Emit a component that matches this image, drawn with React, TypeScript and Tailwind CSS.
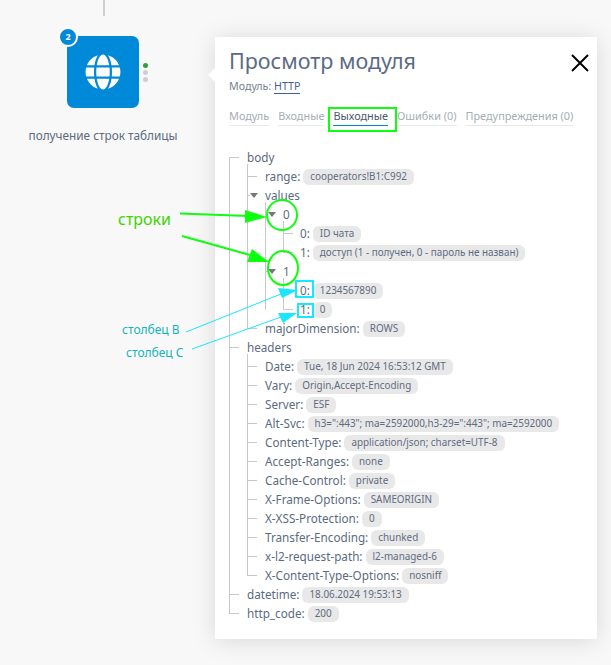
import React from "react";
import { FaGlobe } from "react-icons/fa";

const Chip = ({ children }: { children: React.ReactNode }) => (
  <span className="ml-[3px] inline-flex h-[16px] items-center rounded-[6px] bg-[#e8e8e8] px-[7px] text-[9.9px] leading-none whitespace-nowrap text-[#5f6b82]">
    {children}
  </span>
);

type RowP = { label: string; value?: string; tri?: boolean; short?: boolean };

const Row = ({ label, value, tri, short }: RowP) => (
  <div className="flex h-[19px] items-center whitespace-nowrap text-[11.7px] text-[#5b6b80]">
    {tri ? (
      <span className="-ml-[18px] mr-[7px] flex w-[11px] items-center">
        <span className="h-px w-[3px] bg-[#c8c8c8]" />
        <span className="h-0 w-0 border-x-[4px] border-t-[5px] border-x-transparent border-t-[#777]" />
      </span>
    ) : (
      <span className={short ? "-ml-[17px] mr-[7px] h-px w-[10px] bg-[#c8c8c8]" : "-ml-[18px] mr-[8px] h-px w-[10px] bg-[#c8c8c8]"} />
    )}
    <span>{label}</span>
    {value !== undefined && <Chip>{value}</Chip>}
  </div>
);

const Branch = ({ children, short, root }: { children: React.ReactNode; short?: boolean; root?: boolean }) => (
  <div className={short ? "relative pl-[17px]" : "relative pl-[18px]"}>
    <span className={root ? "absolute bottom-[9px] left-0 top-[9px] w-px bg-[#c8c8c8]" : "absolute bottom-[9px] left-0 -top-[3px] w-px bg-[#c8c8c8]"} />
    {children}
  </div>
);

const headers: [string, string][] = [
  ["Date:", "Tue, 18 Jun 2024 16:53:12 GMT"],
  ["Vary:", "Origin,Accept-Encoding"],
  ["Server:", "ESF"],
  ["Alt-Svc:", 'h3=":443"; ma=2592000,h3-29=":443"; ma=2592000'],
  ["Content-Type:", "application/json; charset=UTF-8"],
  ["Accept-Ranges:", "none"],
  ["Cache-Control:", "private"],
  ["X-Frame-Options:", "SAMEORIGIN"],
  ["X-XSS-Protection:", "0"],
  ["Transfer-Encoding:", "chunked"],
  ["x-l2-request-path:", "l2-managed-6"],
  ["X-Content-Type-Options:", "nosniff"],
];

const Tab = ({ label, active }: { label: string; active?: boolean }) => (
  <span
    className={
      active
        ? "border-b border-[#0088d6] pb-[1px] leading-[16px] text-[#4b5a70]"
        : "border-b border-[#e9e9e9] pb-[1px] leading-[16px] text-[#a6adb6]"
    }
  >
    {label}
  </span>
);

export default function App() {
  return (
    <div className="relative h-[665px] w-[611px] overflow-hidden bg-[#f8f8f8] font-['Noto_Sans',sans-serif]">
      {/* canvas: connector and module node */}
      <div className="absolute left-[103px] top-0 h-[16px] w-[2px] bg-[#cfcfcf]" />
      <div className="absolute left-[3px] top-[36px] flex w-[200px] flex-col items-center">
        <div className="relative flex h-[72px] w-[72px] items-center justify-center rounded-[7px] bg-[#0089d8] text-white">
          <FaGlobe size={36} />
          <span className="absolute -left-[9px] -top-[9px] flex h-[20px] w-[20px] items-center justify-center rounded-full border-2 border-white bg-[#0089d8] text-[9px] font-bold">
            2
          </span>
          <span className="absolute -right-[9px] top-[27px] flex flex-col gap-[2px]">
            <span className="h-[5px] w-[5px] rounded-full bg-[#2ea043]" />
            <span className="h-[5px] w-[5px] rounded-full bg-[#cfcfcf]" />
            <span className="h-[5px] w-[5px] rounded-full bg-[#cfcfcf]" />
          </span>
        </div>
        <div className="mt-[18px] text-[11.8px] leading-[18px] text-[#5b6b80]">получение строк таблицы</div>
      </div>

      {/* panel */}
      <div className="absolute left-[215px] top-[37px] h-[602px] w-[382px] bg-white pl-[14px] pt-[8px] shadow-[0_2px_22px_rgba(0,0,0,0.13)]">
        <span className="absolute -left-[5px] top-[33px] h-[10px] w-[10px] rotate-45 bg-white" />
        <svg className="absolute right-[8px] top-[17px]" width="18" height="18" viewBox="0 0 18 18">
          <path d="M1 1 L17 17 M17 1 L1 17" stroke="#000" strokeWidth="2" fill="none" />
        </svg>
        <div className="text-[21.5px] leading-[32px] text-[#5b6b85]">Просмотр модуля</div>
        <div className="flex h-[18px] items-center text-[10.7px] text-[#76828f]">
          Модуль:&nbsp;
          <span className="border-b border-[#3f5fa8] leading-[14px] text-[#4a5f95]">HTTP</span>
        </div>
        <div className="mt-[13px] flex gap-[9px] text-[10.9px]">
          <Tab label="Модуль" />
          <Tab label="Входные" />
          <Tab label="Выходные" active />
          <Tab label="Ошибки (0)" />
          <Tab label="Предупреждения (0)" />
        </div>
        <div className="mt-[22px]">
          <Branch root>
            <Row label="body" />
            <Branch>
              <Row label="range:" value="cooperators!B1:C992" />
              <Row label="values" tri />
              <Branch>
                <Row label="0" tri />
                <Branch short>
                  <Row label="0:" value="ID чата" short />
                  <Row label="1:" value="доступ (1 - получен, 0 - пароль не назван)" short />
                </Branch>
                <Row label="1" tri />
                <Branch short>
                  <Row label="0:" value="1234567890" short />
                  <Row label="1:" value="0" short />
                </Branch>
              </Branch>
              <Row label="majorDimension:" value="ROWS" />
            </Branch>
            <Row label="headers" />
            <Branch>
              {headers.map(([k, v]) => (
                <Row key={k} label={k} value={v} />
              ))}
            </Branch>
            <Row label="datetime:" value="18.06.2024 19:53:13" />
            <Row label="http_code:" value="200" />
          </Branch>
        </div>
      </div>

      {/* hand-drawn annotations over the screenshot */}
      <svg className="pointer-events-none absolute left-0 top-0" width="611" height="665" viewBox="0 0 611 665" fill="none">
        <rect x="329" y="108" width="67" height="23" stroke="#0dff0d" strokeWidth="2" />
        <ellipse cx="282" cy="215" rx="15" ry="15" stroke="#0dff0d" strokeWidth="2" />
        <ellipse cx="283" cy="268" rx="15" ry="17" stroke="#0dff0d" strokeWidth="2" />
        <path d="M180 213.5 L248 216" stroke="#0dff0d" strokeWidth="2" />
        <path d="M267 217 L245 210 L245 223 Z" fill="#0dff0d" />
        <path d="M182 236 L250 255" stroke="#0dff0d" strokeWidth="2" />
        <path d="M269 262 L252 249 L247 262 Z" fill="#0dff0d" />
        <rect x="296" y="281" width="17" height="16" stroke="#19e6ff" strokeWidth="2" />
        <rect x="298" y="304" width="15" height="13" stroke="#19e6ff" strokeWidth="2" />
        <path d="M186 332 L281 294" stroke="#19e6ff" strokeWidth="1" />
        <path d="M298 290 L278 288 L282 298 Z" fill="#19e6ff" />
        <path d="M192 349 L281 317" stroke="#19e6ff" strokeWidth="1" />
        <path d="M297 313 L278 313 L283 323 Z" fill="#19e6ff" />
      </svg>
      <span className="absolute left-[118px] top-[208px] text-[16px] leading-[22px] text-[#3fd400]">строки</span>
      <span className="absolute left-[122px] top-[321px] text-[12px] leading-[18px] text-[#14b4bc]">столбец B</span>
      <span className="absolute left-[126px] top-[344px] text-[12px] leading-[18px] text-[#14b4bc]">столбец C</span>
    </div>
  );
}
